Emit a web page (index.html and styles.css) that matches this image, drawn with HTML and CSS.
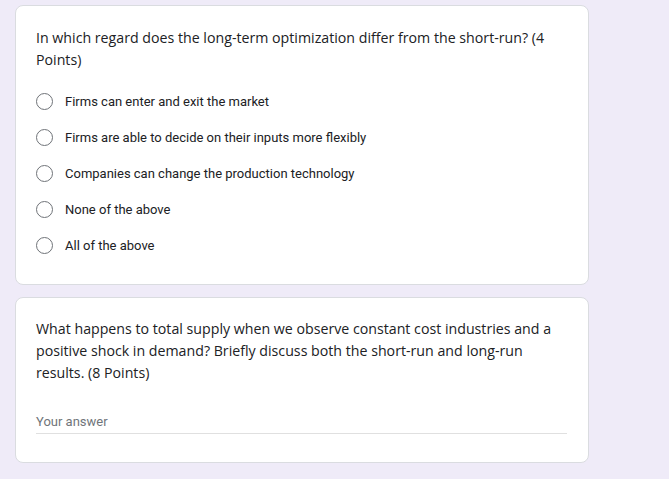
FILE: index.html
```html
<!DOCTYPE html>
<html>
<head>
<meta charset="utf-8">
<link rel="stylesheet" href="styles.css">
</head>
<body>
<div class="page">
  <div class="card card-choice">
    <div class="question">In which regard does the long-term optimization differ from the short-run? (4 Points)</div>
    <div class="options">
      <label class="option"><span class="radio"></span><span class="option-text">Firms can enter and exit the market</span></label>
      <label class="option"><span class="radio"></span><span class="option-text">Firms are able to decide on their inputs more flexibly</span></label>
      <label class="option"><span class="radio"></span><span class="option-text">Companies can change the production technology</span></label>
      <label class="option"><span class="radio"></span><span class="option-text">None of the above</span></label>
      <label class="option"><span class="radio"></span><span class="option-text">All of the above</span></label>
    </div>
  </div>
  <div class="card card-text">
    <div class="question">What happens to total supply when we observe constant cost industries and a positive shock in demand? Briefly discuss both the short-run and long-run results. (8 Points)</div>
    <div class="answer"><span class="placeholder">Your answer</span></div>
  </div>
</div>
</body>
</html>
```

FILE: styles.css
```css
html, body {
  margin: 0;
  padding: 0;
  background: #efebf8;
}
.page {
  display: flex;
  flex-direction: column;
  gap: 12px;
  padding: 5px 0 0 15px;
  width: 574px;
}
.card {
  background: #fff;
  border: 1px solid #dadce0;
  border-radius: 8px;
  padding: 21px 21px 21px 20px;
}
.question {
  font-family: "Open Sans", sans-serif;
  font-size: 14.2px;
  line-height: 22px;
  color: #202124;
  letter-spacing: 0;
}
.options {
  margin-top: 12px;
  display: flex;
  flex-direction: column;
}
.option {
  display: flex;
  align-items: center;
  height: 36px;
}
.radio {
  box-sizing: border-box;
  width: 17px;
  height: 17px;
  border: 1.6px solid #6f7378;
  border-radius: 50%;
  margin-right: 12px;
  flex: none;
}
.option-text {
  font-family: Roboto, sans-serif;
  font-size: 13px;
  color: #202124;
}
.card-text {
  padding-top: 20px;
  padding-bottom: 28px;
}
.answer {
  margin-top: 25px;
  width: 531px;
  height: 24px;
  border-bottom: 1px solid #e0e0e0;
  display: flex;
  align-items: center;
}
.placeholder {
  font-family: Roboto, sans-serif;
  font-size: 13px;
  color: #70757a;
}
```
